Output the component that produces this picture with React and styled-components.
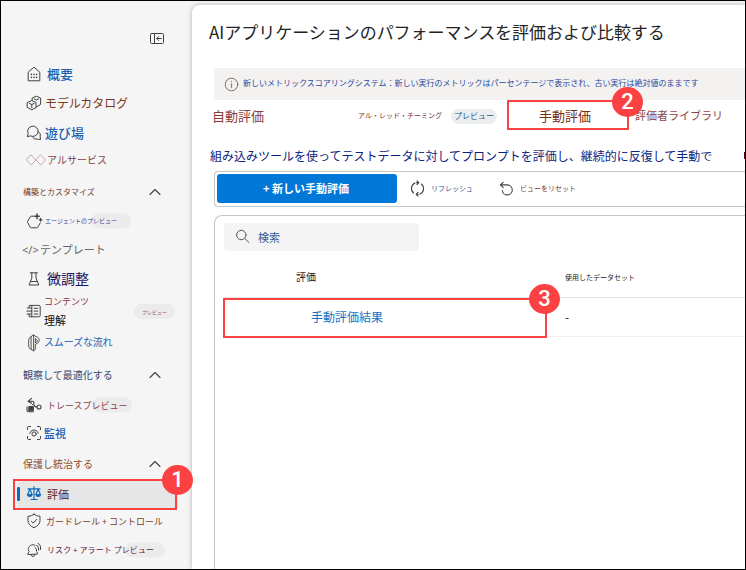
import React from "react";
import styled, { createGlobalStyle, css } from "styled-components";

const Global = createGlobalStyle`
  *, *::before, *::after { box-sizing: border-box; }
  body { margin: 0; overflow: hidden; }
`;

const Frame = styled.div`
  position: relative;
  display: flex;
  width: 746px;
  height: 570px;
  overflow: hidden;
  border: 1px solid #000;
  background: #f5f5f5;
  font-family: "Noto Sans CJK JP", "Noto Sans", sans-serif;
  color: #222;
`;

const Text = styled.span`
  position: relative;
  font-size: ${(p) => p.$size}px;
  line-height: 1;
  white-space: nowrap;
  color: ${(p) => p.$color};
  font-weight: ${(p) => p.$weight || 400};
  letter-spacing: ${(p) => p.$spacing || 0}px;
  padding-bottom: ${(p) => p.$lift || 0}px;
`;

/* ---------- sidebar ---------- */

const Sidebar = styled.nav`
  display: flex;
  flex-direction: column;
  flex: 0 0 191px;
`;

const SidebarTop = styled.div`
  display: flex;
  flex: none;
  align-items: flex-end;
  justify-content: flex-end;
  height: 58px;
  padding: 0 28px 15px 0;
`;

const Item = styled.div`
  position: relative;
  display: flex;
  align-items: center;
  height: ${(p) => p.$h}px;
  padding-left: 25px;
  flex: none;
`;

const IconSlot = styled.span`
  display: flex;
  flex: 0 0 ${(p) => p.$w}px;
  width: ${(p) => p.$w}px;
`;

const Section = styled(Item)`
  justify-content: space-between;
  padding: 0 31px 0 22px;
`;

const SelectedItem = styled(Item)`
  height: 28px;
  margin: 5px 14px 3px 16px;
  padding: 0 0 2px 9px;
  background: #e6e6e6;
  border-radius: 3px;
  &::before {
    content: "";
    position: absolute;
    left: 0;
    top: 6px;
    width: 3px;
    height: 14px;
    border-radius: 1px;
    background: #0f6cbd;
  }
`;

const PilledLabel = styled(Text)`
  z-index: 0;
  &::before {
    content: "";
    position: absolute;
    z-index: -1;
    left: ${(p) => p.$pillX}px;
    top: 50%;
    width: 40px;
    height: 15px;
    border-radius: 8px;
    background: #ebebeb;
    transform: translateY(-50%);
  }
`;

const Stack = styled.span`
  display: flex;
  flex-direction: column;
  gap: 9px;
`;

const Pill = styled.span`
  display: flex;
  align-items: center;
  justify-content: center;
  width: ${(p) => p.$w}px;
  height: 15px;
  border-radius: 8px;
  background: ${(p) => p.$bg || "#ebebeb"};
`;

const EndPill = styled(Pill)`
  margin: 0 17px 0 auto;
`;

const CodeMark = styled(Text)`
  margin-left: -4px;
  width: 18px;
  font-family: "Noto Sans", sans-serif;
`;

/* ---------- main panel ---------- */

const Main = styled.main`
  flex: 1;
  min-width: 0;
  display: flex;
  flex-direction: column;
  margin-top: 4px;
  background: #fff;
  border-top-left-radius: 8px;
  box-shadow: 0 0 5px rgba(0, 0, 0, 0.28);
`;

const Title = styled.h1`
  display: flex;
  align-items: center;
  height: 53px;
  margin: 0 0 10px;
  padding-left: 17px;
  font-weight: 400;
`;

const Banner = styled.div`
  display: flex;
  align-items: center;
  height: 32px;
  margin-left: 22px;
  padding-left: 10px;
  gap: 4px;
  background: #f3f2f1;
`;

const Tabs = styled.div`
  display: grid;
  grid-template-columns: 146px 93px 88px 96px auto;
  align-items: center;
  height: 32px;
  padding-left: 20px;
`;

const Lead = styled.div`
  display: flex;
  align-items: center;
  justify-content: space-between;
  height: 47px;
  padding-left: 18px;
`;

const ClippedMark = styled.i`
  width: 1px;
  height: 7px;
  background: #5a0010;
`;

const Toolbar = styled.div`
  display: flex;
  align-items: center;
  height: 36px;
  margin: -8px 0 0 22px;
  padding: 0 0 1px 2px;
  border: 1px solid #c6c6c6;
  border-right: 0;
  border-radius: 4px 0 0 4px;
`;

const PrimaryButton = styled.button`
  display: flex;
  align-items: center;
  justify-content: center;
  width: 180px;
  height: 29px;
  padding: 0 2px 1px 0;
  border: 0;
  border-radius: 3px;
  background: #0078d7;
  font-family: inherit;
`;

const ToolAction = styled.span`
  display: flex;
  align-items: center;
  gap: ${(p) => p.$gap}px;
  margin-left: ${(p) => p.$ml}px;
`;

const Panel = styled.section`
  flex: 1;
  margin: 8px 0 0 22px;
  padding: 7px 0 0 9px;
  border: 1px solid #c6c6c6;
  border-width: 1px 0 0 1px;
  border-top-left-radius: 8px;
`;

const Search = styled.div`
  display: flex;
  align-items: center;
  gap: 7px;
  width: 195px;
  height: 28px;
  padding-left: 11px;
  border-radius: 4px;
  background: #f4f4f4;
`;

const Row = styled.div`
  display: grid;
  grid-template-columns: 341px 1fr;
  align-items: center;
  height: ${(p) => p.$h}px;
  border-bottom: 1px solid ${(p) => p.$line};
`;

const Cell = styled.span`
  display: flex;
  padding-left: ${(p) => p.$pad || 0}px;
  ${(p) => p.$drop && css`padding-top: ${p.$drop}px;`}
`;

/* ---------- numbered callouts ---------- */

const Callout = styled.div`
  position: absolute;
  z-index: 3;
  left: ${(p) => p.$x - 1}px;
  top: ${(p) => p.$y - 1}px;
  width: ${(p) => p.$w}px;
  height: ${(p) => p.$h}px;
  border: 2px solid #fb4141;
`;

const Badge = styled.b`
  position: absolute;
  right: ${(p) => p.$right}px;
  top: ${(p) => p.$top}px;
  display: flex;
  align-items: center;
  justify-content: center;
  width: 31px;
  height: 30px;
  border-radius: 50%;
  background: #fb4141;
  color: #fff;
  font: 500 22px/30px Roboto, "Liberation Sans", sans-serif;
`;

/* ---------- icons ---------- */

const Svg = styled.svg`
  display: block;
  flex: none;
  fill: none;
  stroke: ${(p) => p.$color || "#424242"};
  stroke-width: ${(p) => p.$sw || 1};
  stroke-linecap: round;
  stroke-linejoin: round;
`;

const Icon = ({ w = 16, h = 16, color, sw, children }) => (
  <Svg width={w} height={h} viewBox={`0 0 ${w} ${h}`} $color={color} $sw={sw}>
    {children}
  </Svg>
);

const CollapseIcon = () => (
  <Icon w={14} h={12}>
    <rect x="0.5" y="1.5" width="13" height="10" rx="1" />
    <path d="M4.5 1.5v10M11.3 6.5H6.8M8.5 4.7L6.7 6.5l1.8 1.8" />
  </Icon>
);
const HomeIcon = () => (
  <Icon>
    <path d="M2.2 14.4V6.1L8 1.2l5.8 4.9v8.3z" />
    <path d="M5.4 8.3v.1M8 8.3v.1M10.6 8.3v.1M5.4 11.3v.1M8 11.3v.1M10.6 11.3v.1" strokeWidth="1.5" />
  </Icon>
);
const CubesIcon = () => (
  <Icon>
    <path d="M1.5 7.4l4.3-1.9 4.2 1.9v5.2l-4.2 2.2-4.3-2.2z M3.4 8.4l2.4 1.1 2.4-1.1M5.8 9.5v3.4" />
    <path d="M6.2 5V3l4.2-1.8 4.2 1.8v6.4L10.2 12M8.2 3.9l2.3 1 2.2-1" />
  </Icon>
);
const ChatIcon = () => (
  <Icon>
    <path d="M1.4 11.4l.8-2.8A5.2 5.2 0 1 1 4.6 11z" />
    <path d="M12.2 6.5a4.3 4.3 0 0 1 2 5.3l.4 2.8-2.9-.5a4.6 4.6 0 0 1-5-1.7" />
  </Icon>
);
const DiamondsIcon = () => (
  <Icon w={20} h={12} color="#b88a90" sw={0.7}>
    <path d="M5.2 1l4.6 5-4.6 5L.6 6zM14.8 1l4.6 5-4.6 5-4.6-5z" />
  </Icon>
);
const AgentIcon = () => (
  <Icon w={17} h={17} sw={1}>
    <path d="M8 3.2H5.2q-.7 0-1 .6L1.6 8.4q-.3.6 0 1.2l2.6 4.6q.3.6 1 .6h5.6q.7 0 1-.6l2.4-4.2" />
    <path d="M11 1v4.4M8.8 3.2h4.4" strokeWidth="1.5" />
    <path d="M14.6 5.4v2.8M13.2 6.8H16" strokeWidth="1.2" />
  </Icon>
);
const FlaskIcon = () => (
  <Icon>
    <path d="M4.2 1.8h7.2M5.8 2v5.1L3 14h9.8L10 7.1V2M4.7 10.5h6.4" />
  </Icon>
);
const ContentIcon = () => (
  <Icon>
    <path d="M3.2 4.6V2.4h9.6q1.4 0 1.4 1.4v8.6q0 1.4-1.4 1.4H3.2v-2.6M1.2 5h4M.8 8.1h5M1.2 11h4M5.8 2.4v11.4M8.2 5.3h3.6M8.2 8.1h3.6M8.2 11h3.6" />
  </Icon>
);
const FlowIcon = () => (
  <Icon w={16} h={18} sw={0.9}>
    <path d="M7.6 1.2v15.6L4.3 14.9Q2.7 14 2.7 12.2V5.8Q2.7 4 4.3 3.1z" />
    <path d="M7.6 1.2l3.9 2.1q1.7.9 1.7 2.9 0 1.9-1.6 2.9L9.3 10.5v4.9l-1.7 1.4" />
    <path d="M9.4 5v4l2-1.9zM5.1 3v11.8" />
  </Icon>
);
const TraceIcon = () => (
  <Icon sw={1.1}>
    <rect x="2.8" y="9.5" width="4.5" height="4.2" rx=".5" fill="#424242" />
    <circle cx="13" cy="10" r="2" />
    <path d="M5.5 1.3L2 4.3l3.5 2M2.3 4.3h3.9q1.8 0 1.8 1.7 0 1.5-1.5 1.5M8 7.8q.4 2.2 3 2.2M1 10v3.2q0 1.5 1.5 1.5h5" />
  </Icon>
);
const MonitorIcon = () => (
  <Icon>
    <path d="M1.5 4.6V2.8q0-1.3 1.3-1.3h1.8M11.4 1.5h1.8q1.3 0 1.3 1.3v1.8M14.5 11.4v1.8q0 1.3-1.3 1.3h-1.8M4.6 14.5H2.8q-1.3 0-1.3-1.3v-1.8" />
    <circle cx="8" cy="9" r="2.1" />
    <path d="M3.7 8.2Q5 4.9 8 4.9t4.3 3.3" />
  </Icon>
);
const ScaleIcon = () => (
  <Icon color="#0f6cbd" sw={1.2}>
    <path d="M8 .8v12.400M5 13.500h6M2 2.900h12M3.800 3.100L1.700 8.500M3.800 3.100L6 8.500M12.200 3.100L10 8.500M12.200 3.100l2.100 5.400" />
    <path d="M1.400 8.500h4.800q-.3 2-2.400 2t-2.400-2zM9.800 8.500h4.800q-.3 2-2.400 2t-2.400-2z" fill="#0f6cbd" />
  </Icon>
);
const ShieldIcon = () => (
  <Icon>
    <path d="M8 1.3q2.5 2 6 2v4.2q0 4.7-6 7.2-6-2.5-6-7.2V3.3q3.5 0 6-2zM5.3 8.1l1.9 1.9 3.6-3.7" />
  </Icon>
);
const BellIcon = () => (
  <Icon>
    <path d="M9 3.200A4.600 4.600 0 0 0 2.300 7.500l.7 2.200-1.300 2.200q-.2.500.3.600l9.300-.4q.5-.1.400-.6l-1-1.800" />
    <path d="M4.700 12.600q.6 2 2.300 1.900 1.600-.1 2-2" />
    <path d="M9 5.300q1.800.9 1.600 3.300M10.700 3.200q2.600 1.600 2 5M12.200 1.200q3.300 2.300 2.500 6.300" />
  </Icon>
);
const Chevron = () => (
  <Icon w={12} h={8} sw={1.1}>
    <path d="M1 6.5l5-5 5 5" />
  </Icon>
);
const InfoIcon = () => (
  <Icon w={15} h={15} color="#77736c">
    <circle cx="7.5" cy="7.5" r="6.3" />
    <path d="M7.5 6.700v4M7.5 4.400v.1" stroke="#b08a3c" strokeWidth="1.3" />
  </Icon>
);
const RefreshIcon = () => (
  <Icon w={15} h={17} sw={1.1}>
    <path d="M5 2.9A6 6 0 0 0 3.6 13M10 14.1A6 6 0 0 0 11.4 4M6.6 2.6h1.600M6.800 14.300h1.400M7 .8l1.800 1.800L7 4.500M8 12.500l-1.800 1.800L8 16.200" />
  </Icon>
);
const ResetIcon = () => (
  <Icon w={15} h={15} sw={1.1}>
    <path d="M4.2 1.3L1.4 3.9l2.8 2.7M1.6 3.9h6.700a5 5 0 1 1-5 5.600" />
  </Icon>
);
const SearchIcon = () => (
  <Icon w={16} h={16} color="#555">
    <circle cx="6.3" cy="6" r="4.7" />
    <path d="M9.800 9.500l4.200 4" />
  </Icon>
);

const NavItem = ({ h, icon, slot, children }) => (
  <Item $h={h}>
    <IconSlot $w={slot}>{icon}</IconSlot>
    {children}
  </Item>
);

const NavSection = ({ h, size, color, children }) => (
  <Section $h={h}>
    <Text $size={size} $color={color}>{children}</Text>
    <Chevron />
  </Section>
);

export default function App() {
  return (
    <Frame lang="ja">
      <Global />
      <Sidebar>
        <SidebarTop><CollapseIcon /></SidebarTop>
        <NavItem h={29} slot={21} icon={<HomeIcon />}>
          <Text $size={13} $color="#1d5fae" $weight={500}>概要</Text>
        </NavItem>
        <NavItem h={30} slot={19} icon={<CubesIcon />}>
          <Text $size={12} $color="#7c3a1c" $spacing={-0.1}>モデルカタログ</Text>
        </NavItem>
        <NavItem h={29} slot={19} icon={<ChatIcon />}>
          <Text $size={13} $color="#1d5fae" $weight={500}>遊び場</Text>
        </NavItem>
        <NavItem h={26} slot={21} icon={<DiamondsIcon />}>
          <Text $size={10} $color="#84404a">アルサービス</Text>
        </NavItem>

        <NavSection h={38} size={8} color="#73402e">構築とカスタマイズ</NavSection>
        <NavItem h={20} slot={19} icon={<AgentIcon />}>
          <PilledLabel $size={6} $color="#3c3a94" $pillX={46}>エージェントのプレビュー</PilledLabel>
        </NavItem>
        <Item $h={36}>
          <CodeMark $size={11} $color="#666">&lt;/&gt;</CodeMark>
          <Text $size={11} $color="#666">テンプレート</Text>
        </Item>
        <NavItem h={24} slot={21} icon={<FlaskIcon />}>
          <Text $size={14} $color="#1b1464" $lift={2}>微調整</Text>
        </NavItem>
        <NavItem h={40} slot={18} icon={<ContentIcon />}>
          <Stack>
            <Text $size={9} $color="#86323c">コンテンツ</Text>
            <Text $size={11} $color="#111">理解</Text>
          </Stack>
          <EndPill $w={41}>
            <Text $size={5} $color="#9a5560">プレビュー</Text>
          </EndPill>
        </NavItem>
        <NavItem h={23} slot={18} icon={<FlowIcon />}>
          <Text $size={10} $color="#1560b0" $spacing={-0.15} $lift={1}>スムーズな流れ</Text>
        </NavItem>

        <NavSection h={42} size={10} color="#33466f">観察して最適化する</NavSection>
        <NavItem h={18} slot={21} icon={<TraceIcon />}>
          <PilledLabel $size={9} $color="#8a4146" $pillX={45}>トレースプレビュー</PilledLabel>
        </NavItem>
        <NavItem h={38} slot={18} icon={<MonitorIcon />}>
          <Text $size={11} $color="#1763b8" $weight={500}>監視</Text>
        </NavItem>

        <NavSection h={24} size={10} color="#8c4d2c">保護し統治する</NavSection>
        <SelectedItem>
          <IconSlot $w={21}><ScaleIcon /></IconSlot>
          <Text $size={11} $color="#5c1a1e">評価</Text>
        </SelectedItem>
        <NavItem h={18} slot={20} icon={<ShieldIcon />}>
          <Text $size={9} $color="#7c4028">ガードレール + コントロール</Text>
        </NavItem>
        <NavItem h={40} slot={21} icon={<BellIcon />}>
          <PilledLabel $size={8} $color="#5e2046" $pillX={78} $spacing={0.08}>リスク + アラート プレビュー</PilledLabel>
        </NavItem>
      </Sidebar>

      <Main>
        <Title>
          <Text $size={17} $color="#242424" $spacing={-0.03}>AIアプリケーションのパフォーマンスを評価および比較する</Text>
        </Title>
        <Banner>
          <InfoIcon />
          <Text $size={8} $color="#2a489c" $lift={2}>
            新しいメトリックスコアリングシステム：新しい実行のメトリックはパーセンテージで表示され、古い実行は絶対値のままです
          </Text>
        </Banner>
        <Tabs>
          <Text $size={13} $color="#8a3c3c" $lift={2}>自動評価</Text>
          <Text $size={7} $color="#743342" $lift={2}>アル・レッド・チーミング</Text>
          <Pill $w={46} $bg="#ebeeef">
            <Text $size={8} $color="#235c86">プレビュー</Text>
          </Pill>
          <Text $size={13} $color="#752f10" $lift={2}>手動評価</Text>
          <Text $size={11} $color="#8a4444" $lift={2}>評価者ライブラリ</Text>
        </Tabs>
        <Lead>
          <Text $size={12} $color="#0b2480">
            組み込みツールを使ってテストデータに対してプロンプトを評価し、継続的に反復して手動で
          </Text>
          <ClippedMark />
        </Lead>
        <Toolbar>
          <PrimaryButton>
            <Text $size={11} $color="#fff" $weight={700}>+ 新しい手動評価</Text>
          </PrimaryButton>
          <ToolAction $ml={13} $gap={6}>
            <RefreshIcon />
            <Text $size={7} $color="#34498c">リフレッシュ</Text>
          </ToolAction>
          <ToolAction $ml={26} $gap={6}>
            <ResetIcon />
            <Text $size={7} $color="#703a2c">ビューをリセット</Text>
          </ToolAction>
        </Toolbar>
        <Panel>
          <Search>
            <SearchIcon />
            <Text $size={11} $color="#2c5c98">検索</Text>
          </Search>
          <Row $h={47} $line="#e3e3e3">
            <Cell $pad={72} $drop={6}><Text $size={10} $color="#222">評価</Text></Cell>
            <Cell $drop={6}><Text $size={7} $color="#222">使用したデータセット</Text></Cell>
          </Row>
          <Row $h={39} $line="#efefef">
            <Cell $pad={87}><Text $size={12} $color="#1273c4">手動評価結果</Text></Cell>
            <Cell><Text $size={12} $color="#222">-</Text></Cell>
          </Row>
        </Panel>
      </Main>

      <Callout $x={13} $y={479} $w={164} $h={31}>
        <Badge $right={-18} $top={-16}>1</Badge>
      </Callout>
      <Callout $x={507} $y={100} $w={122} $h={30}>
        <Badge $right={-16} $top={-15}>2</Badge>
      </Callout>
      <Callout $x={223} $y={298} $w={324} $h={40}>
        <Badge $right={-15} $top={-16}>3</Badge>
      </Callout>
    </Frame>
  );
}
